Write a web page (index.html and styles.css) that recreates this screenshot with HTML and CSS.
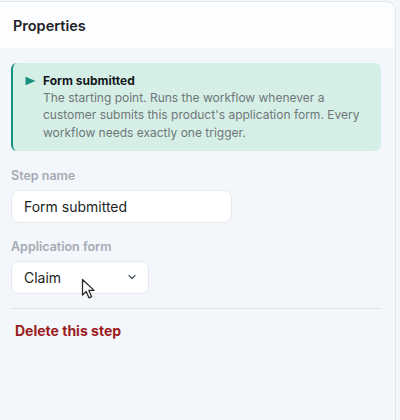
FILE: index.html
```html
<!DOCTYPE html>
<html lang="en">
<head>
<meta charset="utf-8">
<title>Properties</title>
<link rel="stylesheet" href="styles.css">
</head>
<body>
<aside class="panel">
  <header class="panel-header">
    <h2 class="panel-title">Properties</h2>
  </header>
  <div class="panel-body">
    <div class="notice">
      <span class="notice-icon">
        <svg width="11" height="10" viewBox="0 0 11 10"><path d="M0.5 0.8 L10.5 5 L0.5 9.2 Z" fill="#16907f"/></svg>
      </span>
      <div class="notice-text">
        <div class="notice-title">Form submitted</div>
        <p class="notice-desc">The starting point. Runs the workflow whenever a customer submits this product's application form. Every workflow needs exactly one trigger.</p>
      </div>
    </div>

    <label class="field-label" for="step-name">Step name</label>
    <input id="step-name" class="text-input" type="text" value="Form submitted">

    <label class="field-label" for="app-form">Application form</label>
    <div class="select" id="app-form">
      <span class="select-value">Claim</span>
      <svg class="select-chevron" width="10" height="6" viewBox="0 0 10 6"><path d="M2 1.5 L5 4.5 L8 1.5" fill="none" stroke="#4b5563" stroke-width="1.2" stroke-linecap="round" stroke-linejoin="round"/></svg>
    </div>

    <hr class="divider">
    <button class="delete-btn" type="button">Delete this step</button>
  </div>
</aside>
<svg class="cursor" width="16" height="22" viewBox="0 0 16 22">
  <path d="M1.5 1.5 L1.5 17 L5.2 13.4 L8 19.8 L10.6 18.7 L7.9 12.4 L13 12.4 Z" fill="#ffffff" stroke="#2b2b2b" stroke-width="1.3" stroke-linejoin="round"/>
</svg>
</body>
</html>
```

FILE: styles.css
```css
* { box-sizing: border-box; }

html, body {
  margin: 0;
  padding: 0;
  background: #f3f6fa;
  font-family: Inter, "Noto Sans", "Liberation Sans", sans-serif;
  color: #1d2127;
  height: 100%;
}

body {
  position: relative;
  padding-top: 1px;
}

.panel {
  width: 396px;
  height: 419px;
  background: #f3f6fa;
  border-top: 1px solid #e4e8ee;
  border-right: 1px solid #e1e6ec;
  border-top-right-radius: 10px;
  overflow: hidden;
}

.panel-header {
  height: 46px;
  background: #fcfdfe;
  padding: 0 13px;
  display: flex;
  align-items: center;
}

.panel-title {
  margin: 0;
  font-size: 14.5px;
  font-weight: 600;
  color: #1d2127;
  letter-spacing: 0;
}

.panel-body {
  padding: 15px 14px 0 11px;
  display: flex;
  flex-direction: column;
  align-items: flex-start;
}

.notice {
  align-self: stretch;
  display: flex;
  background: #d6efe6;
  border-left: 2px solid #16907f;
  border-radius: 6px;
  padding: 9px 12px 10px 12px;
  margin-bottom: 17px;
}

.notice-icon {
  width: 18px;
  flex: none;
  padding-top: 4px;
}

.notice-icon svg { display: block; }

.notice-title {
  font-size: 12px;
  font-weight: 700;
  line-height: 17px;
  color: #14181d;
}

.notice-desc {
  margin: 0;
  font-size: 12px;
  line-height: 17.3px;
  color: #6e7679;
}

.field-label {
  font-size: 12.5px;
  font-weight: 600;
  line-height: 16px;
  color: #a4aab4;
  margin-bottom: 6px;
}

.text-input {
  width: 221px;
  height: 33px;
  border: 1px solid #e6e9ee;
  border-radius: 8px;
  background: #ffffff;
  padding: 0 12px;
  font-family: inherit;
  font-size: 14px;
  color: #1b1f24;
  margin: 0 0 16px 0;
  outline: none;
}

.select {
  width: 138px;
  height: 33px;
  border: 1px solid #e6e9ee;
  border-radius: 8px;
  background: #ffffff;
  padding: 0 11px 0 12px;
  display: flex;
  align-items: center;
  justify-content: space-between;
  margin-bottom: 14px;
}

.select-value {
  font-size: 14px;
  color: #1b1f24;
}

.select-chevron { display: block; }

.divider {
  align-self: stretch;
  margin: 0;
  border: 0;
  border-top: 1px solid #e2e6ec;
}

.delete-btn {
  margin-top: 12px;
  background: none;
  border: 0;
  padding: 0 4px;
  font-family: inherit;
  font-size: 14px;
  line-height: 20px;
  font-weight: 700;
  color: #9b1c1f;
  cursor: pointer;
}

.cursor {
  position: absolute;
  left: 81px;
  top: 278px;
}
```
